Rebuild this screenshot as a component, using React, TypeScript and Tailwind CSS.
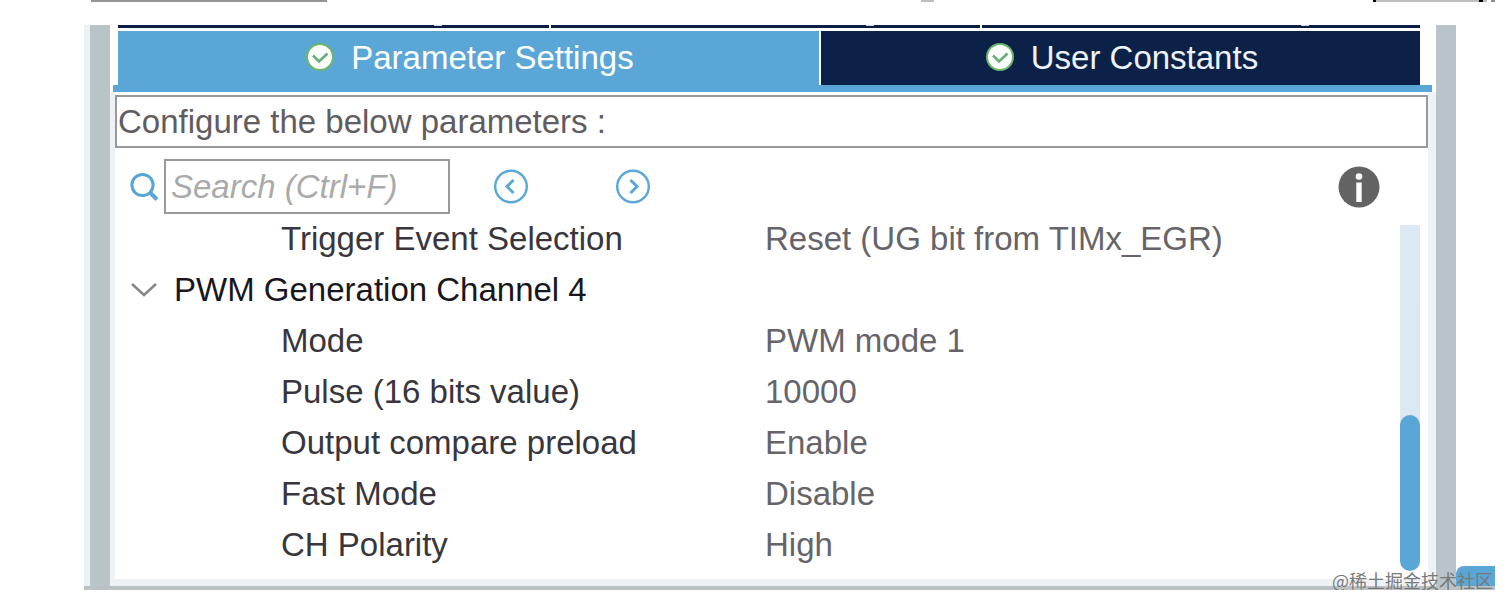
import { useState } from "react";

type Parameter = {
  name: string;
  value: string;
};

const TABS = [
  { id: "parameters", label: "Parameter Settings", width: "grow-[701]" },
  { id: "constants", label: "User Constants", width: "grow-[599]" },
];

const TRIGGER_PARAMETERS: Parameter[] = [
  { name: "Trigger Event Selection", value: "Reset (UG bit from TIMx_EGR)" },
];

const CHANNEL_PARAMETERS: Parameter[] = [
  { name: "Mode", value: "PWM mode 1" },
  { name: "Pulse (16 bits value)", value: "10000" },
  { name: "Output compare preload", value: "Enable" },
  { name: "Fast Mode", value: "Disable" },
  { name: "CH Polarity", value: "High" },
];

function CheckIcon() {
  return (
    <svg viewBox="0 0 30 30" className="size-[30px] shrink-0" aria-hidden="true">
      <circle cx="15" cy="14" r="13" fill="#fbfffb" stroke="#6db56c" strokeWidth="2" />
      <path d="M8 12.5 14 18.5 22.5 10.5" fill="none" stroke="#69ad7c" strokeWidth="2.6" />
    </svg>
  );
}

function SearchIcon() {
  return (
    <svg viewBox="0 0 30 30" className="size-[30px]" fill="none" stroke="#58a6d6" aria-hidden="true">
      <circle cx="12.5" cy="13" r="10.6" strokeWidth="3" />
      <path d="m20 20.5 7 7" strokeWidth="4" />
    </svg>
  );
}

function ArrowIcon({ d }: { d: string }) {
  return (
    <svg viewBox="0 0 36 36" className="size-9" fill="none" stroke="#5ba8d8" aria-hidden="true">
      <circle cx="18" cy="17.5" r="15.8" strokeWidth="2.4" />
      <path d={d} strokeWidth="3" />
    </svg>
  );
}

function InfoIcon() {
  return (
    <svg viewBox="0 0 42 42" className="size-[42px]" aria-hidden="true">
      <circle cx="21" cy="21" r="20.5" fill="#636363" />
      <circle cx="21" cy="10.5" r="3.3" fill="#fff" />
      <path d="M18.3 16.5h5.4V36h-5.4z" fill="#fff" />
    </svg>
  );
}

function ParameterRow({ name, value }: Parameter) {
  return (
    <tr className="h-[51px]">
      <th scope="row" className="p-0 pb-[2px] pl-[166px] text-left font-normal text-[#38363c]">
        {name}
      </th>
      <td className="p-0 pb-[2px] text-[#66646a]">{value}</td>
    </tr>
  );
}

// Lower edge of the window above
function TopEdge() {
  return (
    <div className="flex h-[25px] items-start pr-[17px] pl-[91px]">
      <div className="h-[2px] w-[236px] bg-[#959595]" />
      <div className="ml-auto h-[2px] w-[13px] bg-[#bdbdbd]" />
      <div className="ml-[439px] flex h-[2px] w-[122px]">
        <div className="w-[3px] bg-black" />
        <div className="grow bg-[#bdbdbd]" />
        <div className="w-[4px] bg-black" />
        <div className="w-[4px] bg-[#bdbdbd]" />
        <div className="ml-[4px] w-[4px] bg-[#8c8c8c]" />
      </div>
    </div>
  );
}

export default function App() {
  const [activeTab, setActiveTab] = useState("parameters");
  const [expanded, setExpanded] = useState(true);
  const [query, setQuery] = useState("");

  return (
    <div className="bg-white font-['Liberation_Sans',Arial,sans-serif] text-[33px] leading-[40px]">
      <TopEdge />

      <main className="relative mr-[17px] ml-[84px] border-b-4 border-[#bcc2c4]">
        <div className="flex">
          <div className="w-[6px] shrink-0 bg-[#edf1f2]" />

          <div className="flex min-w-0 grow flex-col border-x-20 border-[#b8c4c7]">
            <div className="pr-[16px] pl-[8px]">
              {/* Bottom of the first tab row */}
              <div className="grid h-[6px] grid-cols-[431fr_429fr_438fr] gap-[2px]">
                {["left", "middle", "right"].map((slot) => (
                  <div key={slot} className="flex h-[3px] justify-center bg-[#0b1d44] pl-[208px]">
                    <span className="h-px w-[8px] bg-[#cdd4e2]" />
                  </div>
                ))}
              </div>

              <div role="tablist" className="flex h-[54px] gap-[2px]">
                {TABS.map((tab) => (
                  <button
                    key={tab.id}
                    type="button"
                    role="tab"
                    aria-selected={activeTab === tab.id}
                    onClick={() => setActiveTab(tab.id)}
                    className={`flex basis-0 items-center justify-center gap-4 pl-[2px] whitespace-nowrap ${tab.width} ${
                      activeTab === tab.id ? "bg-[#5aa7d7] text-white" : "bg-[#0c2148] text-[#eef2fa]"
                    }`}
                  >
                    <CheckIcon />
                    {tab.label}
                  </button>
                ))}
              </div>
            </div>

            <div className="mr-[4px] ml-[3px] h-[7px] bg-[#5aa7d7]" />

            <div className="border-r-8 border-b-7 border-l-5 border-[#eff2f4] bg-white">
              <div className="mt-[3px] flex h-[53px] items-center border-2 border-[#97999b] pl-px text-[#5f5c62]">
                Configure the below parameters :
              </div>

              <div className="flex items-center pt-[11px] pr-[48px] pl-[15px]">
                <label htmlFor="search" aria-label="Search">
                  <SearchIcon />
                </label>
                <input
                  id="search"
                  type="text"
                  value={query}
                  onChange={(e) => setQuery(e.target.value)}
                  placeholder="Search (Ctrl+F)"
                  className="ml-[4px] h-[55px] w-[286px] border-2 border-[#97999b] px-[5px] italic placeholder:text-[#aaaaaa]"
                />
                <button type="button" aria-label="Previous match" className="ml-[43px]">
                  <ArrowIcon d="m20.5 11-6.5 6.5 6.5 6.5" />
                </button>
                <button type="button" aria-label="Next match" className="ml-[86px]">
                  <ArrowIcon d="m15.5 11 6.5 6.5-6.5 6.5" />
                </button>
                <button type="button" aria-label="Information" className="ml-auto">
                  <InfoIcon />
                </button>
              </div>

              <div className="flex pr-[8px] pb-[8px]">
                <table className="grow table-fixed border-collapse">
                  <colgroup>
                    <col className="w-[650px]" />
                    <col />
                  </colgroup>
                  <tbody>
                    {TRIGGER_PARAMETERS.map((parameter) => (
                      <ParameterRow key={parameter.name} {...parameter} />
                    ))}
                    <tr className="h-[51px]">
                      <th scope="rowgroup" colSpan={2} className="p-0 pb-[2px] pl-[14px] text-left font-normal text-[#19171e]">
                        <button
                          type="button"
                          aria-expanded={expanded}
                          onClick={() => setExpanded(!expanded)}
                          className="flex items-center gap-[15px]"
                        >
                          <svg viewBox="0 0 30 20" className="h-5 w-[30px]" fill="none" aria-hidden="true">
                            <path d="m3 4 12 11L27 4" stroke="#858585" strokeWidth="2.6" />
                          </svg>
                          PWM Generation Channel 4
                        </button>
                      </th>
                    </tr>
                    {expanded &&
                      CHANNEL_PARAMETERS.map((parameter) => (
                        <ParameterRow key={parameter.name} {...parameter} />
                      ))}
                  </tbody>
                </table>

                {/* Scrollbar */}
                <div className="mt-[11px] flex w-5 shrink-0 flex-col justify-end bg-linear-to-b from-[#dce8f4] from-90% to-white to-90%">
                  <div className="h-[156px] rounded-full bg-[#5aa7d7]" />
                </div>
              </div>
            </div>
          </div>

          <div className="flex w-[39px] shrink-0 items-end">
            <div className="h-5 grow rounded-tl-lg bg-[#5aa7d7]" />
          </div>
        </div>

        <p className="absolute right-[2px] -bottom-[6px] font-['Noto_Sans_CJK_SC',sans-serif] text-[18px] leading-[24px] whitespace-nowrap text-[#77797b]">
          @稀土掘金技术社区
        </p>
      </main>
    </div>
  );
}
